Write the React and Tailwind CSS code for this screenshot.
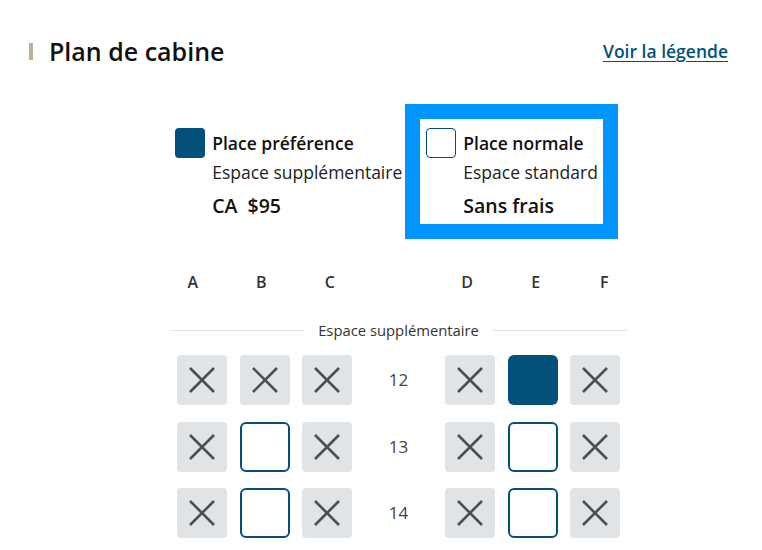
import React from "react";

const X = () => (
  <svg width="26" height="26" viewBox="0 0 26 26" fill="none" stroke="#4b4f54" strokeWidth="2.6" strokeLinecap="butt">
    <path d="M1 1 L25 25 M25 1 L1 25" />
  </svg>
);

function Seat({ t }) {
  if (t === "x")
    return (
      <div className="w-[50px] h-[50px] rounded-[4px] bg-[#e1e4e7] flex items-center justify-center">
        <X />
      </div>
    );
  if (t === "sel") return <div className="w-[50px] h-[50px] rounded-[6px] bg-[#03517a]" />;
  return <div className="w-[50px] h-[50px] rounded-[6px] border-2 border-[#03517a] bg-white" />;
}

function Group({ seats }) {
  return (
    <div className="flex gap-[12.5px]">
      {seats.map((s, i) => (
        <Seat key={i} t={s} />
      ))}
    </div>
  );
}

const rows = [
  { n: 12, l: ["x", "x", "x"], r: ["x", "sel", "x"] },
  { n: 13, l: ["x", "o", "x"], r: ["x", "o", "x"] },
  { n: 14, l: ["x", "o", "x"], r: ["x", "o", "x"] },
];

export default function App() {
  return (
    <div className="w-[762px] h-[550px] bg-white overflow-hidden text-[#111]" style={{ fontFamily: '"Open Sans", "Noto Sans", sans-serif' }}>
      <div className="flex items-center justify-between pl-[29px] pr-[34px] pt-[36px]">
        <div className="flex items-center">
          <div className="w-[4px] h-[17px] bg-[#bfae96]" />
          <h1 className="ml-[16px] text-[25px] font-semibold leading-[30px]">Plan de cabine</h1>
        </div>
        <a className="text-[17.5px] font-semibold text-[#00527a] underline underline-offset-[3px] leading-[30px]">Voir la légende</a>
      </div>

      <div className="pl-[35px] flex flex-col items-center">
        <div className="flex mt-[38px] mr-[4px]">
          <div className="flex pt-[24px] pr-[3px]">
            <div className="w-[30px] h-[30px] rounded-[4px] bg-[#03517a]" />
            <div className="ml-[7px]">
              <div className="text-[17.5px] font-semibold leading-[30px]">Place préférence</div>
              <div className="text-[17.5px] leading-[28px] text-[#222]">Espace supplémentaire</div>
              <div className="text-[19.5px] font-semibold leading-[36px] mt-[2px]">CA&nbsp;&nbsp;$95</div>
            </div>
          </div>
          <div className="border-[15px] border-[#0096ff] pl-[6px] pr-[5px] pt-[9px]">
            <div className="flex">
              <div className="w-[30px] h-[30px] rounded-[4px] border-[1.5px] border-[#03517a]" />
              <div className="ml-[7px]">
                <div className="text-[17.5px] font-semibold leading-[30px]">Place normale</div>
                <div className="text-[17.5px] leading-[28px] text-[#222]">Espace standard</div>
                <div className="text-[19.5px] font-semibold leading-[36px] mt-[2px]">Sans frais</div>
              </div>
            </div>
          </div>
        </div>

        <div className="w-[480px] grid grid-cols-7 mt-[31px] text-[16px] font-semibold text-[#333] leading-[24px]">
          {["A", "B", "C", "", "D", "E", "F"].map((c, i) => (
            <div key={i} className="text-center">{c}</div>
          ))}
        </div>

        <div className="w-[457px] flex items-center mt-[26px]">
          <div className="flex-1 h-px bg-[#e3e3e3]" />
          <div className="px-[14px] text-[14.8px] text-[#333] leading-[20px]">Espace supplémentaire</div>
          <div className="flex-1 h-px bg-[#e3e3e3]" />
        </div>

        <div className="flex flex-col gap-[16.5px] mt-[15px]">
          {rows.map((r) => (
            <div key={r.n} className="flex items-center">
              <Group seats={r.l} />
              <div className="w-[93px] text-center text-[17px] text-[#444]">{r.n}</div>
              <Group seats={r.r} />
            </div>
          ))}
        </div>
      </div>
    </div>
  );
}
